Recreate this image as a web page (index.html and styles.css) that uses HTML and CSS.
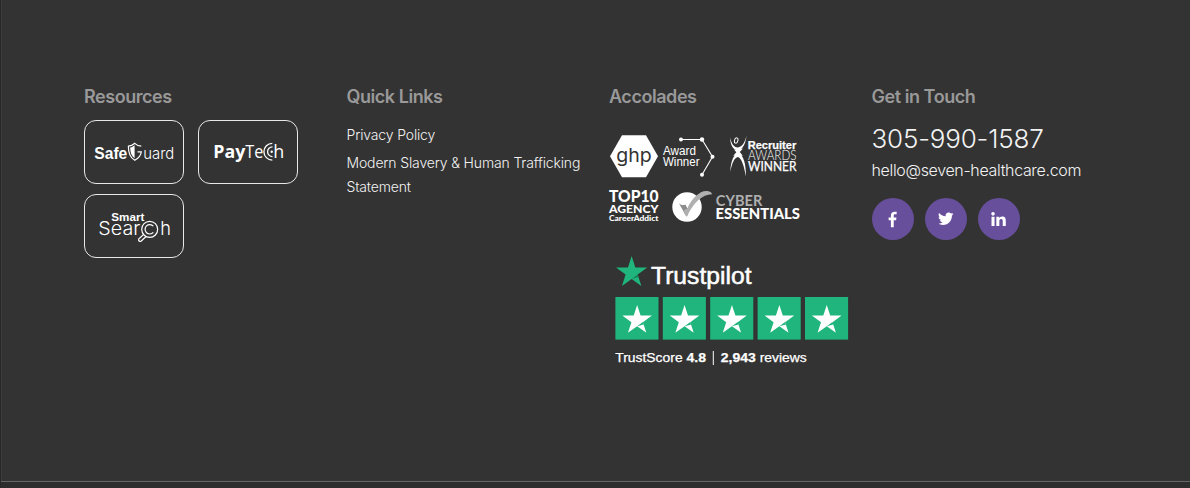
FILE: index.html
```html
<!DOCTYPE html>
<html lang="en">
<head>
<meta charset="utf-8">
<title>Seven Healthcare</title>
<link rel="stylesheet" href="styles.css">
</head>
<body>
<svg class="defs" aria-hidden="true">
  <symbol id="star" viewBox="0 0 30 28.3" preserveAspectRatio="none">
    <path d="M30 10.8H18.5L15 0 11.5 10.8H0L9.2 17.5 5.7 28.3 15 21.6 24.3 28.3 20.8 17.5z"/>
  </symbol>
</svg>
<footer class="footer">
  <div class="columns">
    <section class="column">
      <h2 class="title">Resources</h2>
      <div class="cards">
        <a class="card"><svg class="card-logo" viewBox="0 0 100 64">
          <text class="arial bold" x="10.3" y="39" font-size="16" textLength="33" lengthAdjust="spacingAndGlyphs">Safe</text>
          <path class="line" d="M57.3 26.2C54.5 26 52.5 25 50.8 23.3C49 25 47 26 44.4 26.2C44.300 33 46 37.500 50.800 40.300C55 38 57 35 57.300 31.800H53.500" stroke-width="1.2"/>
          <path d="M50.600 25.300C49.300 26.600 47.900 27.300 46.200 27.500C46.200 32.500 47.500 36 50.600 38.300z"/>
          <text class="inter light" x="59.300" y="39" font-size="15.500" textLength="31" lengthAdjust="spacingAndGlyphs">uard</text>
        </svg></a>
        <a class="card"><svg class="card-logo" viewBox="0 0 100 64">
          <text class="open bold" x="15.300" y="38.300" font-size="18" textLength="32" lengthAdjust="spacingAndGlyphs">Pay</text>
          <text class="open" x="47.300" y="38.300" font-size="18" textLength="18" lengthAdjust="spacingAndGlyphs">Te</text>
          <path class="line" d="M74.300 23.300A8.400 8.400 0 0 0 74.300 40.100M74.500 26.800A4.900 4.900 0 0 0 74.500 36.600" stroke-width="1.300"/>
          <circle cx="73.700" cy="31.700" r="1.200"/>
          <text class="open" x="75.300" y="38.300" font-size="18" textLength="11" lengthAdjust="spacingAndGlyphs">h</text>
        </svg></a>
        <a class="card"><svg class="card-logo" viewBox="0 0 100 64">
          <text class="arial bold" x="27.300" y="26.500" font-size="11" textLength="33" lengthAdjust="spacingAndGlyphs">Smart</text>
          <text class="inter light" x="14.300" y="41.300" font-size="18.500" textLength="42" lengthAdjust="spacingAndGlyphs">Sear</text>
          <circle class="line" cx="65.700" cy="35.300" r="8" stroke-width="1.200"/>
          <path class="line" d="M69.300 32.200A4.700 4.700 0 1 0 69.300 38.400M59.500 40.500L54.700 45C54 47 56 48 57.300 47L62 42.500" stroke-width="1.200"/>
          <text class="inter light" x="76.300" y="41.300" font-size="18.500" textLength="10.700" lengthAdjust="spacingAndGlyphs">h</text>
        </svg></a>
      </div>
    </section>

    <section class="column">
      <h2 class="title">Quick Links</h2>
      <ul class="links">
        <li class="link">Privacy Policy</li>
        <li class="link">Modern Slavery &amp; Human Trafficking Statement</li>
      </ul>
    </section>

    <section class="column">
      <h2 class="title">Accolades</h2>
      <svg class="awards" viewBox="0 0 200 92">
        <path d="M13 2.200H37L49 23.300 37 44.300H13L1 23.300z"/>
        <text class="inter dark" x="7.300" y="29" font-size="19" textLength="35.500" lengthAdjust="spacingAndGlyphs">ghp</text>
        <text class="arial" x="54" y="22.300" font-size="12" textLength="33" lengthAdjust="spacingAndGlyphs">Award</text>
        <text class="arial" x="54" y="32.500" font-size="12" textLength="36.500" lengthAdjust="spacingAndGlyphs">Winner</text>
        <path class="line" d="M72 6.500H93L103.500 23.700 93 41.700" stroke-width="1.100"/>
        <circle cx="72" cy="6.500" r="2"/><circle cx="93" cy="6.500" r="2.200"/><circle cx="103.500" cy="23.700" r="2"/><circle cx="93" cy="41.700" r="2"/>
        <path d="M121 4.500C121.500 13.500 125 17.300 128.800 17.300C133.500 17.300 136.500 11 137.600 2.500C136 9 133.300 14.200 128.900 14.400C124.500 14.400 122.500 10.500 121 4.500zM121.200 39C122 26 125.500 20.500 129.300 20.700C134.500 21 137.300 32 136.900 43.500C135 33 132.800 25.500 129 24C125 24.500 123 31 121.200 39z"/>
        <path d="M125 16.500C127.500 16.500 131 16.500 134 15.500L130.800 19 133.800 22.800H124.300L127.300 19.200z"/>
        <ellipse class="line" cx="127.200" cy="7.500" rx="1.700" ry="2.700" transform="rotate(15 127.200 7.500)" stroke-width="1"/>
        <text class="arial bold firm" x="138.700" y="16.200" font-size="11.800" textLength="48.500" lengthAdjust="spacingAndGlyphs">Recruiter</text>
        <text class="lato light" x="139" y="27.300" font-size="12.800" textLength="48.500" lengthAdjust="spacingAndGlyphs">AWARDS</text>
        <text class="lato firm" x="139" y="38.300" font-size="12.800" textLength="48.500" lengthAdjust="spacingAndGlyphs">WINNER</text>
        <text class="lato heavy" x="0" y="69.300" font-size="16" textLength="49.500" lengthAdjust="spacingAndGlyphs">TOP10</text>
        <text class="lato heavy" x="0" y="80.300" font-size="11.300" textLength="49.500" lengthAdjust="spacingAndGlyphs">AGENCY</text>
        <text class="lato heavy" x="0" y="88" font-size="7.500" textLength="49.500" lengthAdjust="spacingAndGlyphs">CareerAddict</text>
        <circle cx="78" cy="74" r="14.700"/>
        <path class="tick-dark" d="M70 70.500C72.500 72.300 74.500 72.500 76.300 71.500L78.500 75.500C80.500 71 83 67.500 87 64.500C83.500 69 80 76 78 83.500C76.500 83 74 77 70 70.500z"/>
        <path class="tick" d="M78.500 75.500C83 64.500 92 56.500 99.500 58.300C101.500 58.700 102.500 59.800 103.300 61.300C94 61 84 70 78 83.500C76.500 83.300 75.500 80 74.800 77z"/>
        <text class="lato bold tick" x="106.800" y="73" font-size="15" textLength="46.500" lengthAdjust="spacingAndGlyphs">CYBER</text>
        <text class="lato heavy" x="106.500" y="85.800" font-size="14.600" textLength="84.500" lengthAdjust="spacingAndGlyphs">ESSENTIALS</text>
      </svg>
      <svg class="trustpilot" viewBox="0 0 246 120">
        <use class="green" href="#star" x="7" y="6" width="31.300" height="30"/>
        <path class="deep" d="M22.700 28.900L28.700 24.500 29.600 27.100z"/>
        <text class="arial medium" x="42" y="34.300" font-size="23.500" textLength="100.500" lengthAdjust="spacingAndGlyphs">Trustpilot</text>
        <g id="rated">
          <rect class="green" x="6.400" y="47" width="43.100" height="42.600"/>
          <use href="#star" x="13.300" y="55" width="29.700" height="27.700"/>
          <path class="green" d="M28.150 76.140L33.900 72.100 34.700 74.600z"/>
        </g>
        <use href="#rated" x="47.400"/>
        <use href="#rated" x="94.800"/>
        <use href="#rated" x="142.200"/>
        <use href="#rated" x="189.600"/>
        <text class="arial firm" x="6.300" y="112.300" font-size="13.200" textLength="67.300" lengthAdjust="spacingAndGlyphs">TrustScore</text>
        <text class="arial bold firm" x="77.500" y="112.300" font-size="13.200" textLength="19.500" lengthAdjust="spacingAndGlyphs">4.8</text>
        <path d="M103.800 101h1v14h-1z"/>
        <text class="arial bold firm" x="111.800" y="112.300" font-size="13.200" textLength="35" lengthAdjust="spacingAndGlyphs">2,943</text>
        <text class="arial firm" x="150.700" y="112.300" font-size="13.200" textLength="47" lengthAdjust="spacingAndGlyphs">reviews</text>
      </svg>
    </section>

    <section class="column">
      <h2 class="title">Get in Touch</h2>
      <a class="phone">305-990-1587</a>
      <a class="email">hello@seven-healthcare.com</a>
      <div class="social">
        <a class="round"><svg class="glyph" viewBox="0 0 18 18"><path d="M7.300 17.300V9.700H4.900V6.800H7.300V4.700C7.300 2 8.900.7 11.200.7C12.300.7 13.200.8 13.400.8V3.500H11.800C10.600 3.500 10.300 4.100 10.300 5V6.800H13.200L12.800 9.700H10.300V17.300z"/></svg></a>
        <a class="round"><svg class="glyph bird" viewBox="0 0 24 24"><path d="M23.950 4.570a10 10 0 0 1-2.820.77 4.960 4.960 0 0 0 2.160-2.720c-.95.550-2 .960-3.130 1.180a4.920 4.920 0 0 0-8.380 4.480C7.690 8.100 4.070 6.130 1.640 3.160a4.820 4.820 0 0 0-.67 2.480c0 1.710.87 3.210 2.190 4.100a4.900 4.900 0 0 1-2.230-.62v.06a4.920 4.920 0 0 0 3.950 4.830 5 5 0 0 1-2.210.08 4.940 4.940 0 0 0 4.600 3.420A9.870 9.870 0 0 1 0 19.540a13.990 13.990 0 0 0 7.550 2.210c9.050 0 14-7.500 14-13.980 0-.21 0-.42-.02-.63a9.940 9.940 0 0 0 2.460-2.550z"/></svg></a>
        <a class="round"><svg class="glyph" viewBox="0 0 18 18"><path d="M1.600 6.200H4.800V16H1.600zM6.700 6.200H9.700V7.600C10.200 6.700 11.300 5.900 12.900 5.900C16.100 5.900 16.700 8 16.700 10.700V16H13.500V11.300C13.500 10.100 13.500 8.600 11.800 8.600S9.900 9.900 9.900 11.200V16H6.700z"/><circle cx="3.200" cy="3" r="1.900"/></svg></a>
      </div>
    </section>
  </div>
</footer>
<div class="bottom"></div>
</body>
</html>
```
FILE: styles.css
```css
* { box-sizing: border-box; }
body { margin: 0; height: 488px; overflow: hidden; background: #333; color: #f2f2f2; font-family: Inter, "Liberation Sans", sans-serif; border-left: 1px solid #292929; display: flex; flex-direction: column; }
.defs { position: absolute; width: 0; height: 0; }
.footer { height: 481px; border-left: 1px solid #3b3b3b; padding: 85px 0 0 82px; }
.bottom { height: 7px; border-top: 1px solid #656565; background: #2d2d2d; }
.columns { display: grid; grid-template-columns: repeat(4, 262.5px); }
.column { display: flex; flex-direction: column; align-items: flex-start; }
.title { margin: 0; font-size: 18px; line-height: 24px; font-weight: 600; color: #999; letter-spacing: -0.45px; }
.cards { display: flex; flex-wrap: wrap; gap: 10px 14px; margin-top: 10.500px; width: 240px; }
.card { width: 100px; height: 64px; border: 1px solid #e8e8e8; border-radius: 12px; }
.card-logo { display: block; width: 100px; height: 64px; margin: -1px; }
.links { list-style: none; margin: 14px 0 0; padding: 0; width: 246px; display: flex; flex-direction: column; gap: 4px; }
.link { font-size: 14px; line-height: 24px; font-weight: 300; letter-spacing: -0.150px; }
.awards { display: block; width: 200px; height: 92px; margin-top: 24px; }
.trustpilot { display: block; width: 246px; height: 120px; margin-top: 25px; }
.phone { margin-top: 12px; font-size: 26px; line-height: 36px; font-weight: 350; letter-spacing: -0.180px; }
.email { margin-top: 1px; font-size: 16px; line-height: 24px; font-weight: 350; letter-spacing: -0.340px; }
.social { display: flex; gap: 11px; margin-top: 16px; }
.round { width: 42px; height: 42px; border-radius: 50%; background: #674f9c; display: flex; align-items: center; justify-content: center; }
.glyph { width: 17px; height: 17px; fill: #fff; }
.bird { width: 15.500px; height: 15.500px; }
svg { fill: #fff; overflow: visible; }
.line { fill: none; stroke: #fff; }
.arial { font-family: "Liberation Sans", sans-serif; }
.inter { font-family: Inter, sans-serif; }
.open { font-family: "Open Sans", sans-serif; }
.lato { font-family: Lato, sans-serif; }
.bold { font-weight: 700; }
.heavy { font-weight: 900; }
.light { font-weight: 300; }
.medium { stroke: #fff; stroke-width: .5px; }
.firm { stroke: #fff; stroke-width: .25px; }
.dark { fill: #333; }
.green { fill: #1fb57c; }
.deep { fill: #168058; }
.tick { fill: #b0b0b0; }
.tick-dark { fill: #8c8c8c; }
```
